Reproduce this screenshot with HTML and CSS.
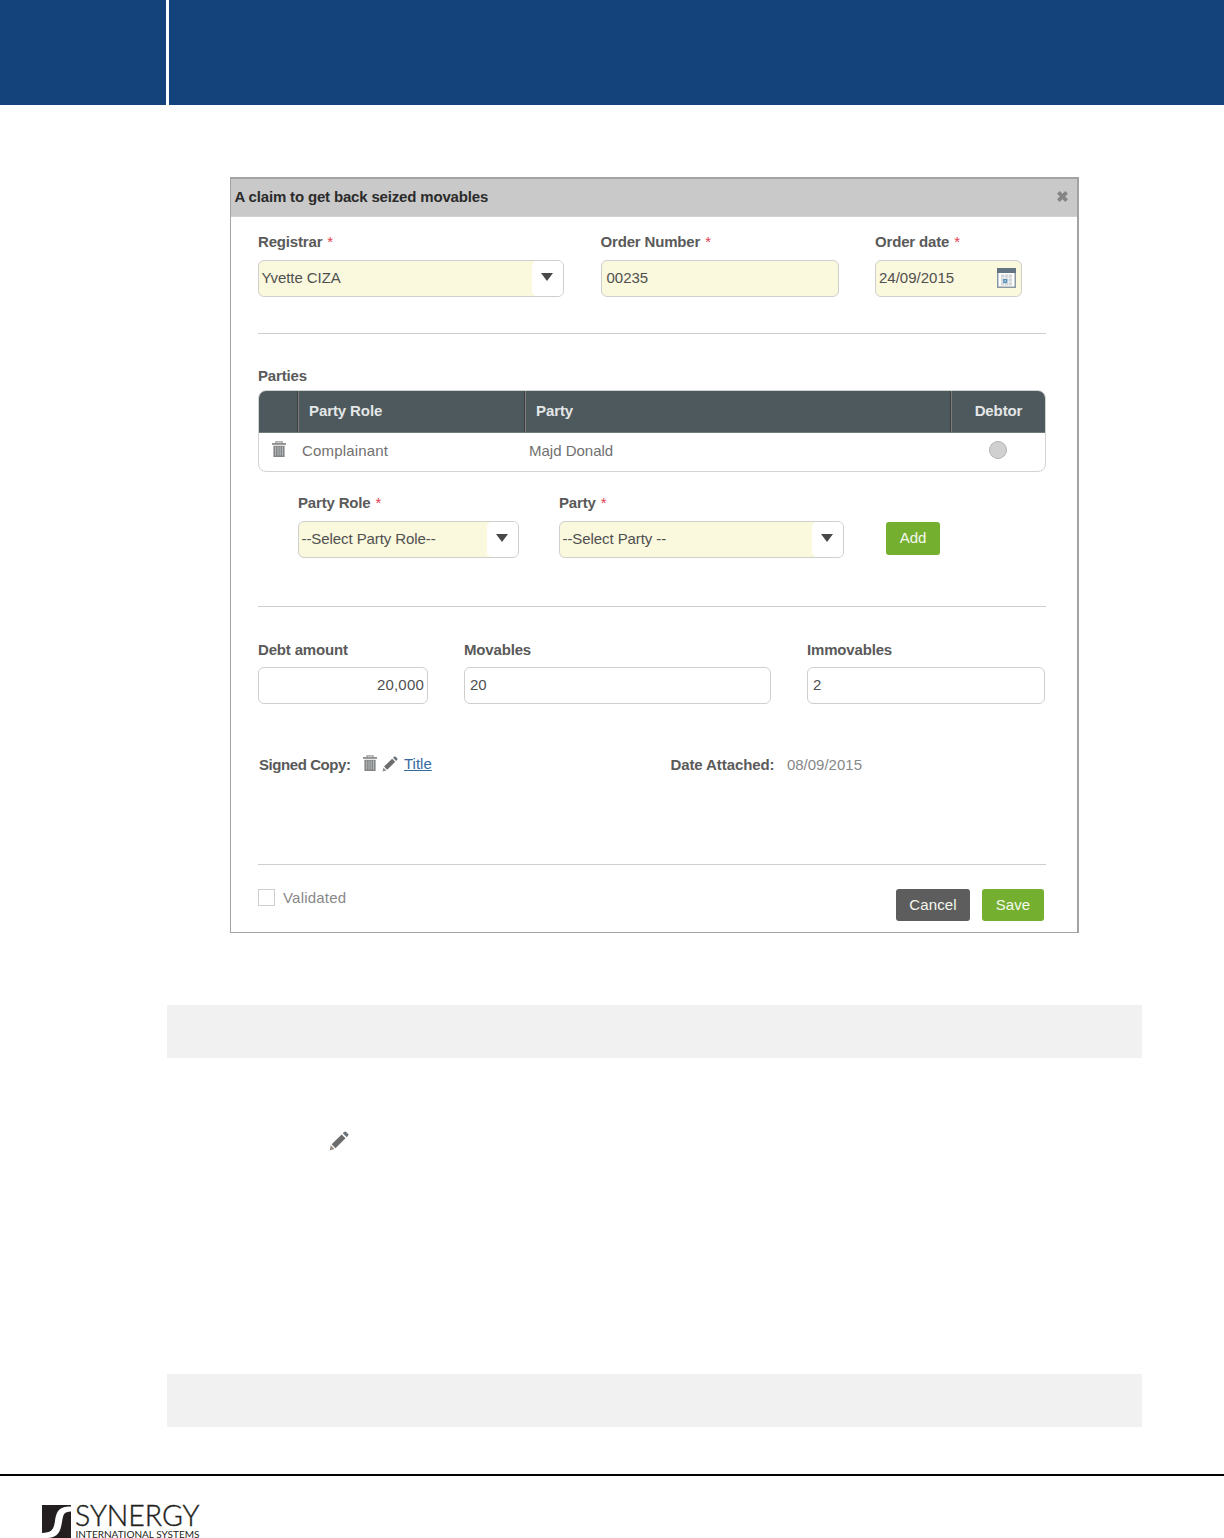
FILE: index.html
```html
<!DOCTYPE html>
<html lang="en">
<head>
<meta charset="utf-8">
<title>A claim to get back seized movables</title>
<link rel="stylesheet" href="styles.css">
</head>
<body>
<svg class="defs" width="0" height="0">
  <symbol id="trash" viewBox="0 0 14 17">
    <path d="M4 2.2V.8h6v1.4" fill="none" stroke="#999" stroke-width="1.3"/>
    <rect x="0" y="2.2" width="14" height="1.5" fill="#777"/>
    <path d="M1.4 4.800h11.2v11.200H1.4z" fill="#858585"/>
    <path d="M3.6 5.500v9M6 5.500v9M8.2 5.500v9M10.5 5.500v9" stroke="#b9c1c5" stroke-width=".9"/>
  </symbol>
  <symbol id="pencil" viewBox="0 0 16 16">
    <path d="M10.1 2.7l3.1 3.1-8 7.9-3.1-3.1z" fill="#6c6c6c"/>
    <path d="M11 1.8l1.1-1.1q.8-.8 1.6 0l1.5 1.5q.8.8 0 1.6l-1.1 1.1z" fill="#6d757c"/>
    <path d="M1.4 11.4l3 3L.5 15.5z" fill="#958c82"/>
  </symbol>
</svg>
<header class="banner"><div class="banner-side"></div><div class="banner-main"></div></header>
<main class="page">
  <section class="dialog">
    <div class="dialog-head">
      <h1 class="dialog-title">A claim to get back seized movables</h1>
      <svg class="close" viewBox="0 0 12 12"><path d="M2.2 2.2l7.6 7.6M9.8 2.2L2.2 9.8" stroke="#858585" stroke-width="3.4"/></svg>
    </div>
    <div class="dialog-body">
      <div class="row row-order">
        <div class="field"><label class="label">Registrar <b class="req">*</b></label>
          <div class="input required select"><span class="value">Yvette CIZA</span><span class="arrow"></span></div></div>
        <div class="field"><label class="label">Order Number <b class="req">*</b></label>
          <div class="input required padded"><span class="value">00235</span></div></div>
        <div class="field"><label class="label">Order date <b class="req">*</b></label>
          <div class="input required date"><span class="value">24/09/2015</span>
            <svg class="calendar" viewBox="0 0 19 20"><rect x=".75" y=".75" width="17.5" height="18.5" fill="#fff" stroke="#8a9aa5" stroke-width="1.5"/><rect width="19" height="5" fill="#637482"/><rect x="4" y="6.5" width="11" height="11" fill="#d2d5d8"/><path d="M4 10h11M4 13.8h11M7.6 6.5v11M11.4 6.5v11" stroke="#f3f4f5" stroke-width=".8"/><rect x="6.2" y="11" width="4" height="4" fill="#4e8db5"/><rect x="7.5" y="12.2" width="1.4" height="1.6" fill="#b9d8ea"/></svg></div></div>
      </div>
      <hr class="rule">
      <h2 class="label parties-title">Parties</h2>
      <div class="table">
        <div class="table-row table-head"><span class="cell"></span><span class="cell">Party Role</span><span class="cell">Party</span><span class="cell center">Debtor</span></div>
        <div class="table-row table-data"><span class="trash-cell"><svg class="trash"><use href="#trash"/></svg></span><span class="data complainant">Complainant</span><span class="data">Majd Donald</span><span class="radio-cell"><span class="radio"></span></span></div>
      </div>
      <div class="row row-party">
        <div class="field"><label class="label">Party Role <b class="req">*</b></label>
          <div class="input required select"><span class="value">--Select Party Role--</span><span class="arrow"></span></div></div>
        <div class="field"><label class="label">Party <b class="req">*</b></label>
          <div class="input required select"><span class="value">--Select Party --</span><span class="arrow"></span></div></div>
        <button class="button add">Add</button>
      </div>
      <hr class="rule">
      <div class="row row-amounts">
        <div class="field"><label class="label">Debt amount</label><div class="input amount"><span class="value">20,000</span></div></div>
        <div class="field"><label class="label">Movables</label><div class="input padded"><span class="value">20</span></div></div>
        <div class="field"><label class="label">Immovables</label><div class="input padded"><span class="value">2</span></div></div>
      </div>
      <div class="files">
        <div class="copy"><span class="label">Signed Copy:</span><svg class="trash"><use href="#trash"/></svg><svg class="pencil"><use href="#pencil"/></svg><a class="link">Title</a></div>
        <div class="attached"><span class="label">Date Attached:</span><span class="attached-date">08/09/2015</span></div>
      </div>
      <hr class="rule">
      <div class="actions">
        <div class="validated"><span class="checkbox"></span><span class="validated-text">Validated</span></div>
        <button class="button cancel">Cancel</button><button class="button save">Save</button>
      </div>
    </div>
  </section>
  <div class="band"></div>
  <div class="step"><svg class="pencil step-pencil"><use href="#pencil"/></svg></div>
  <div class="band"></div>
</main>
<footer class="footer">
  <svg class="logo" viewBox="0 0 160 35">
    <path d="M0 1h29v33H0z" fill="#231f20"/>
    <path d="M29 2.500C16 2.500 14.500 8 13 17S10 28.500 0 29v5h6c11-1 12.500-7.500 14-16S22 8 29 7.500z" fill="#fff"/>
    <text class="logo-name" x="33" y="22" textLength="124.500" lengthAdjust="spacingAndGlyphs">SYNERGY</text>
    <text class="logo-sub" x="33.500" y="34" textLength="124" lengthAdjust="spacingAndGlyphs">INTERNATIONAL SYSTEMS</text>
  </svg>
</footer>
</body>
</html>
```
FILE: styles.css
```css
* { box-sizing: border-box; }
body { margin: 0; width: 1224px; height: 1538px; overflow: hidden; background: #fff; font: 15px/18px "Liberation Sans", Arial, sans-serif; color: #555; }
.defs { display: block; height: 0; }
.banner { display: grid; grid-template-columns: 166px 1fr; gap: 3px; height: 105px; }
.banner-side, .banner-main { background: #14437c; }
.page { height: 1369px; padding: 72px 82px 0 167px; }
.dialog { width: 849px; height: 756px; margin-left: 63px; border: solid #a3a3a3; border-width: 2px 2px 1px 1px; }
.dialog-head { display: flex; justify-content: space-between; align-items: center; height: 38px; padding: 0 8px 2px 3.5px; background: #c9c9c9; border-bottom: 1px solid #d2d2d2; }
.dialog-title { margin: 0; font-size: 15px; letter-spacing: -.17px; color: #2b2b2b; }
.close { width: 13px; height: 13px; }
.dialog-body { padding: 16px 31px 0 27px; }
.row { display: grid; }
.row-order { grid-template-columns: 306px 238px 147px; column-gap: 36.5px; }
.row-party { grid-template-columns: 221px 285px 56px; column-gap: 40px; padding: 22px 0 0 40px; }
.row-party .button { margin: 28px 0 0 2px; }
.row-amounts { grid-template-columns: 170px 307px 238px; column-gap: 36px; margin-top: 34px; }
.label { display: block; margin: 0; font-size: 15px; font-weight: bold; letter-spacing: -.17px; color: #5a5a5a; white-space: nowrap; }
.req { margin-left: 1px; color: #e2404e; font-weight: normal; }
.input { display: flex; align-items: center; height: 37px; margin-top: 9px; padding: 0 2px 1px 3px; border: 1.500px solid #cfcfcf; border-radius: 6px; color: #505050; background: #fff; }
.required { background: #faf8dd; }
.padded { padding-left: 5px; }
.value { flex: 1; }
.select { padding: 0; align-items: stretch; }
.select .value { padding: 8px 0 0 2.500px; letter-spacing: -.08px; }
.arrow { display: flex; align-items: center; justify-content: center; width: 31px; border-radius: 5px; background: #fff; }
.arrow::before { content: ""; margin: -4px 2px 0 0; border: solid transparent; border-width: 8px 6.500px 0; border-top-color: #484848; }
.calendar { width: 19px; height: 20px; margin: 0 3px 0 0; }
.amount { text-align: right; }
.amount .value { letter-spacing: .2px; padding-right: 1px; }
.row-amounts .input { margin-top: 8px; }
.rule { height: 1px; margin: 36px 0 0; border: 0; background: #cecece; width: 788px; }
.parties-title { margin-top: 33px; }
.table { width: 788px; height: 82px; margin-top: 5px; border: 1px solid #d3d3d3; border-radius: 8px; overflow: hidden; }
.table-row { display: grid; grid-template-columns: 39px 227px 426px 1fr; }
.table-head { height: 42px; background: #4d595d; border-bottom: 1px solid #707b7b; color: #e4e6e7; font-weight: bold; letter-spacing: -.1px; }
.cell { padding: 11px 0 0 10px; border-left: 1px solid #817d7a; box-shadow: -1px 0 #393f42; }
.cell:first-child { border: 0; box-shadow: none; }
.cell.center { padding-left: 0; text-align: center; }
.table-data { padding-top: 9px; color: #707070; }
.trash { width: 14px; height: 17px; }
.trash-cell { padding-left: 13px; margin-top: -1px; }
.data { padding-left: 4px; }
.complainant { letter-spacing: .17px; }
.radio-cell { display: flex; justify-content: center; margin-top: -1px; }
.radio { width: 18px; height: 18px; border: 1px solid #b2b2b2; border-radius: 50%; background: #d0d0d0; }
.button { display: block; height: 33px; margin: 0; padding: 0 0 2px; border: 0; border-radius: 3px; background: #75af30; color: #f4f9ef; font: 15px/18px "Liberation Sans", Arial, sans-serif; }
.row-party + .rule { margin-top: 48px; }
.files { display: grid; grid-template-columns: 411.500px 1fr; height: 104px; padding: 52px 0 0 1px; }
.copy, .attached { display: flex; }
.copy .label { letter-spacing: -.43px; }
.copy .trash { margin: -1px 0 0 12.500px; }
.copy .pencil { margin: 0 0 0 5px; }
.pencil { width: 16px; height: 16px; }
.link { margin: -1px 0 0 6px; color: #356a9e; text-decoration: underline; }
.attached .label { letter-spacing: -.1px; }
.attached-date { margin-left: 12.500px; color: #888; }
.files + .rule { margin-top: 56px; }
.actions { display: flex; padding-top: 24px; }
.validated { display: flex; flex: 1; }
.checkbox { width: 17px; height: 17px; margin-right: 8px; border: 1.500px solid #cfcfcf; }
.validated-text { color: #888; letter-spacing: .2px; }
.actions .button { height: 32px; padding-bottom: 1px; letter-spacing: .1px; }
.actions .cancel { width: 74px; margin-right: 12px; background: #5d5d5d; }
.save { width: 62px; margin-right: 2px; }
.band { height: 53px; margin-top: 72px; background: #f1f1f1; }
.step { height: 316px; padding: 73px 0 0 162px; }
.step-pencil { display: block; width: 20px; height: 20px; }
.step + .band { margin-top: 0; }
.footer { height: 64px; border-top: 2px solid #000; padding: 28px 0 0 42px; }
.logo { display: block; width: 160px; height: 35px; }
.logo-name { font: 300 28.500px Lato, sans-serif; fill: #231f20; stroke: #231f20; stroke-width: .4px; }
.logo-sub { font: 400 8.500px Lato, sans-serif; fill: #231f20; }
```
